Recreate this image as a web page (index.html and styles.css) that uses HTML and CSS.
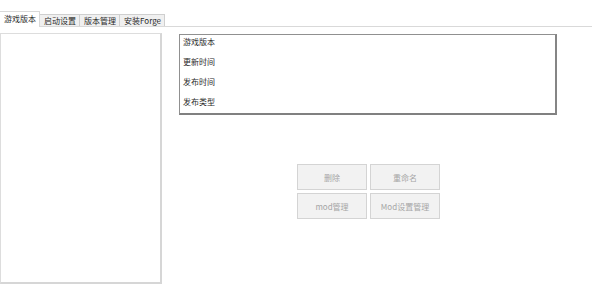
FILE: index.html
```html
<!DOCTYPE html>
<html lang="zh-CN">
<head>
    <meta charset="UTF-8">
    <title>启动器</title>
    <link rel="stylesheet" href="styles.css">
</head>
<body>
    <div class="tabs">
        <div class="tab active">游戏版本</div>
        <div class="tab">启动设置</div>
        <div class="tab">版本管理</div>
        <div class="tab">安装Forge</div>
    </div>
    <div class="page">
        <div class="version-list"></div>
        <div class="detail">
            <div class="info">
                <div class="row">游戏版本</div>
                <div class="row">更新时间</div>
                <div class="row">发布时间</div>
                <div class="row">发布类型</div>
            </div>
            <div class="actions">
                <button disabled>删除</button>
                <button disabled>重命名</button>
                <button disabled>mod管理</button>
                <button disabled>Mod设置管理</button>
            </div>
        </div>
    </div>
</body>
</html>
```

FILE: styles.css
```css
* {
    box-sizing: border-box;
}
body {
    margin: 0;
    background-color: #ffffff;
    font-family: "Noto Sans CJK SC", sans-serif;
    font-size: 8px;
    color: #2a2a2a;
}
.tabs {
    display: flex;
    align-items: flex-end;
    height: 27px;
    border-bottom: 1px solid #d9d9d9;
}
.tab {
    height: 12px;
    line-height: 11px;
    padding: 0 3px 0 4px;
    border: 1px solid #cfcfcf;
    border-bottom: none;
    border-left: none;
    background-color: #f0f0f0;
}
.tab.active {
    height: 16px;
    line-height: 14px;
    margin-bottom: -1px;
    background-color: #ffffff;
    border-color: #d9d9d9;
}
.page {
    display: flex;
    align-items: flex-start;
}
.version-list {
    width: 162px;
    height: 251px;
    margin-top: 6px;
    border: 1px solid #dddddd;
    border-right: 2px solid #d6d6d6;
    border-bottom: 2px solid #d6d6d6;
}
.detail {
    margin-left: 17px;
    margin-top: 7px;
}
.info {
    width: 378px;
    height: 81px;
    padding: 1px 3px;
    overflow: hidden;
    border: 1px solid #909090;
    border-right: 2px solid #858585;
    border-bottom: 2px solid #808080;
}
.row {
    height: 20px;
    line-height: 12px;
}
.actions {
    display: grid;
    grid-template-columns: 70px 70px;
    grid-auto-rows: 26px;
    gap: 3px;
    margin-top: 49px;
    margin-left: 118px;
}
button {
    font-family: inherit;
    font-size: 8px;
    color: #a6a6a6;
    background-color: #f2f2f2;
    border: 1px solid #d4d4d4;
    padding: 0;
}
```
